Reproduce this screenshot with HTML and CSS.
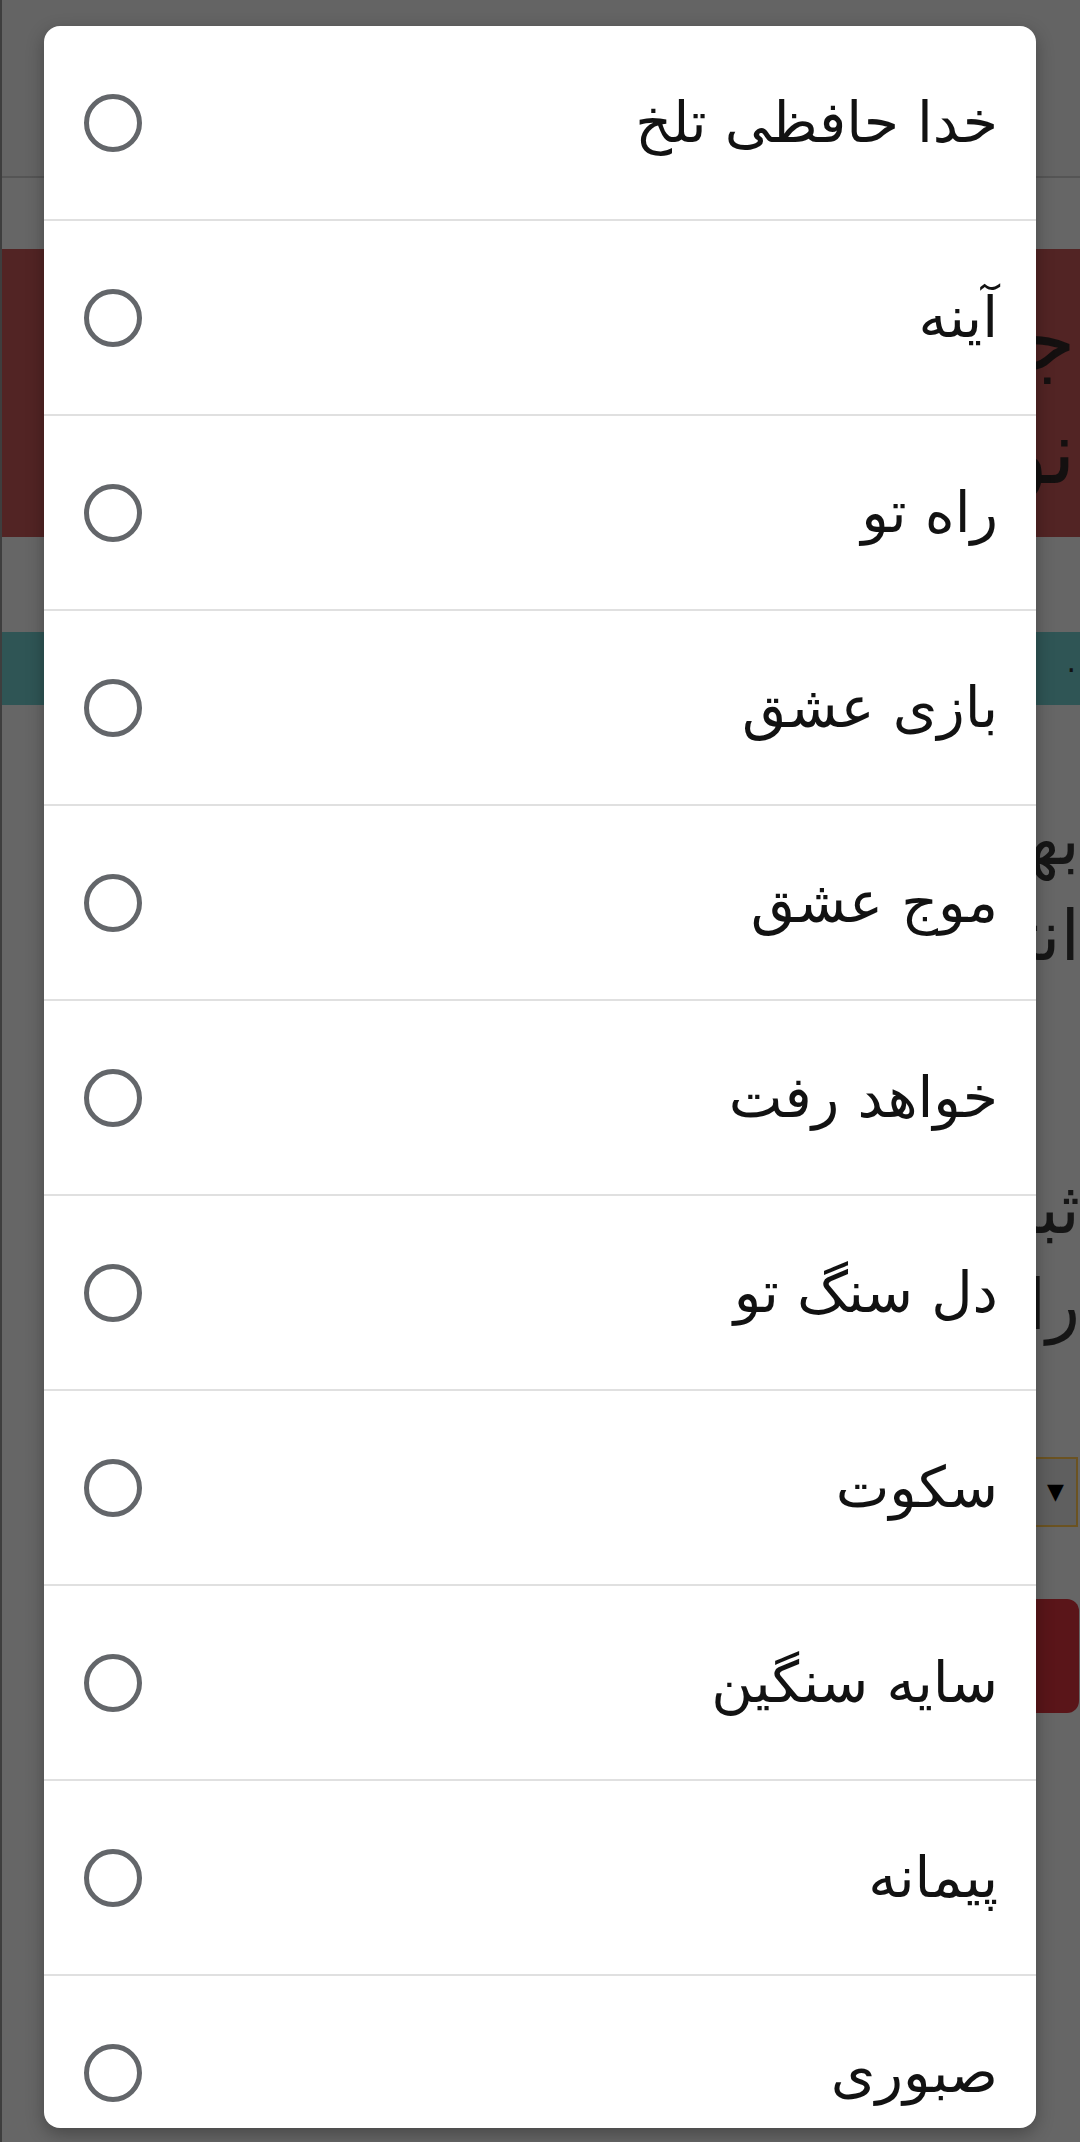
FILE: index.html
```html
<!DOCTYPE html>
<html lang="fa">
<head>
<meta charset="utf-8">
<title>انتخاب آهنگ</title>
<link rel="stylesheet" href="styles.css">
</head>
<body>
<div class="page">
  <div class="topbar"></div>
  <div class="gap-a"></div>
  <div class="banner">
    <div class="banner-line">جستجو</div>
    <div class="banner-line">نوای</div>
  </div>
  <div class="gap-b"></div>
  <div class="strip"><span class="strip-dot">.</span></div>
  <div class="content">
    <div class="big-line first">بهترین</div>
    <div class="big-line">انتخاب</div>
    <div class="big-line second">ثبت</div>
    <div class="big-line">رای</div>
    <div class="select-box"><span class="select-arrow">▼</span></div>
    <div class="action-btn"></div>
  </div>
</div>

<div class="dialog" dir="rtl">
  <ul class="options">
    <li class="option"><span class="label">خدا حافظی تلخ</span><span class="radio"></span></li>
    <li class="option"><span class="label">آینه</span><span class="radio"></span></li>
    <li class="option"><span class="label">راه تو</span><span class="radio"></span></li>
    <li class="option"><span class="label">بازی عشق</span><span class="radio"></span></li>
    <li class="option"><span class="label">موج عشق</span><span class="radio"></span></li>
    <li class="option"><span class="label">خواهد رفت</span><span class="radio"></span></li>
    <li class="option"><span class="label">دل سنگ تو</span><span class="radio"></span></li>
    <li class="option"><span class="label">سکوت</span><span class="radio"></span></li>
    <li class="option"><span class="label">سایه سنگین</span><span class="radio"></span></li>
    <li class="option"><span class="label">پیمانه</span><span class="radio"></span></li>
    <li class="option"><span class="label">صبوری</span><span class="radio"></span></li>
  </ul>
</div>
</body>
</html>
```
FILE: styles.css
```css
html, body {
  margin: 0;
  padding: 0;
}
body {
  width: 1080px;
  height: 2142px;
  overflow: hidden;
  background: #646464;
  position: relative;
  font-family: "DejaVu Sans", sans-serif;
}
.page {
  width: 1080px;
  height: 2142px;
  display: flex;
  flex-direction: column;
  border-left: 2px solid #3e3e3e;
  box-sizing: border-box;
  background: #666666;
}
.topbar {
  height: 176px;
  background: #646464;
  border-bottom: 2px solid #555555;
  flex: none;
}
.gap-a { height: 71px; flex: none; }
.banner {
  height: 288px;
  flex: none;
  background: #522424;
  direction: rtl;
  padding: 36px 4px 0 0;
  box-sizing: border-box;
  color: #141010;
  font-size: 88px;
  line-height: 112px;
}
.gap-b { height: 95px; flex: none; }
.strip {
  height: 73px;
  flex: none;
  background: #2f5555;
  direction: rtl;
  color: #111;
  font-size: 30px;
  line-height: 60px;
  padding-right: 4px;
}
.content {
  flex: 1;
  direction: rtl;
  padding-top: 87px;
  color: #161616;
  font-size: 70px;
  line-height: 96px;
}
.big-line.second {
  margin-top: 177px;
}
.select-box {
  margin: 104px 2px 0 0;
  width: 420px;
  height: 70px;
  box-sizing: border-box;
  border: 2px solid #6b5322;
  background: #5f5f5f;
  direction: ltr;
  display: flex;
  justify-content: flex-end;
  align-items: center;
  padding-right: 12px;
}
.select-arrow {
  font-size: 22px;
  color: #000;
}
.action-btn {
  margin: 72px 1px 0 0;
  width: 700px;
  height: 114px;
  background: #5a1519;
  border-radius: 12px;
}

.dialog {
  position: absolute;
  left: 44px;
  top: 26px;
  width: 992px;
  height: 2102px;
  background: #ffffff;
  border-radius: 16px;
  overflow: hidden;
  box-shadow: 0 6px 18px rgba(0, 0, 0, 0.3);
}
.options {
  list-style: none;
  margin: 0;
  padding: 0;
}
.option {
  height: 193px;
  border-bottom: 2px solid #e0e0e0;
  display: flex;
  align-items: center;
  justify-content: space-between;
  padding: 0 38px 0 40px;
}
.label {
  font-size: 57px;
  color: #121212;
  line-height: 1.2;
}
.radio {
  width: 48px;
  height: 48px;
  border: 5.5px solid #63666a;
  border-radius: 50%;
  flex: none;
}
```
